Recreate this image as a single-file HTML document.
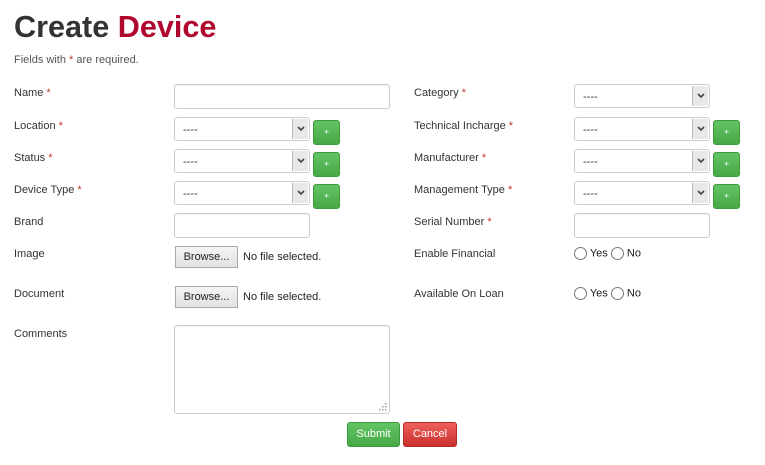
<!DOCTYPE html>
<html><head><meta charset="utf-8"><style>
*{box-sizing:border-box;margin:0;padding:0}
body{width:765px;height:465px;background:#fff;font-family:"Liberation Sans",Arial,sans-serif;position:relative;overflow:hidden;color:#333}
.a{position:absolute}
h1{position:absolute;left:14px;top:10px;font-size:30.6px;font-weight:bold;color:#333;letter-spacing:0}
h1 span{color:#b0072e}
.sub{left:14px;top:54px;font-size:11px;color:#555}
.req{color:#c0392b}
.lbl{font-size:11px;color:#333}
.inp{border:1px solid #ccc;border-radius:3px;background:#fff;box-shadow:inset 0 1px 1px rgba(0,0,0,.06)}
.sel{border:1px solid #ccc;border-radius:3px;background:#fff;height:24px;width:136px;font-size:11px;padding:6px 0 0 8px;color:#333}
.sel:after{content:"";position:absolute;right:1px;top:1px;width:15px;height:20px;background:#e8e8e8;border-left:1px solid #bbb}
.sel svg{position:absolute;right:4px;top:8px;z-index:2}
.plus{width:27px;height:25px;border-radius:3px;background:linear-gradient(#62c462,#45a745);border:1px solid #3e983e;color:#fff;font-size:9px;text-align:center;line-height:23px}
.br{width:63px;height:22px;border:1px solid #aaa;background:linear-gradient(#f4f4f4,#e2e2e2);font-size:11px;text-align:center;line-height:20px;color:#222}
.nf{font-size:11px;color:#222}
.rad{width:13px;height:13px;border:1px solid #777;border-radius:50%;background:#fff;display:inline-block;vertical-align:middle}
.rl{font-size:11px;color:#222}
.btn{height:25px;border-radius:3px;color:#fff;font-size:11px;text-align:center;line-height:23px}
</style></head><body>
<h1>Create <span>Device</span></h1>
<div class="a sub">Fields with <span class="req">*</span> are required.</div>

<div class="a lbl" style="left:14px;top:87px">Name <span class="req">*</span></div>
<div class="a inp" style="left:174px;top:84px;width:216px;height:25px"></div>

<div class="a lbl" style="left:14px;top:120px">Location <span class="req">*</span></div>
<div class="a sel" style="left:174px;top:117px">----<svg width="8" height="6" viewBox="0 0 8 6"><path d="M1 1L4 4L7 1" stroke="#444" stroke-width="1.6" fill="none"/></svg></div>
<div class="a plus" style="left:313px;top:120px">+</div>

<div class="a lbl" style="left:14px;top:152px">Status <span class="req">*</span></div>
<div class="a sel" style="left:174px;top:149px">----<svg width="8" height="6" viewBox="0 0 8 6"><path d="M1 1L4 4L7 1" stroke="#444" stroke-width="1.6" fill="none"/></svg></div>
<div class="a plus" style="left:313px;top:152px">+</div>

<div class="a lbl" style="left:14px;top:184px">Device Type <span class="req">*</span></div>
<div class="a sel" style="left:174px;top:181px">----<svg width="8" height="6" viewBox="0 0 8 6"><path d="M1 1L4 4L7 1" stroke="#444" stroke-width="1.6" fill="none"/></svg></div>
<div class="a plus" style="left:313px;top:184px">+</div>

<div class="a lbl" style="left:14px;top:216px">Brand</div>
<div class="a inp" style="left:174px;top:213px;width:136px;height:25px"></div>

<div class="a lbl" style="left:14px;top:248px">Image</div>
<div class="a br" style="left:175px;top:246px">Browse...</div>
<div class="a nf" style="left:243px;top:251px">No file selected.</div>

<div class="a lbl" style="left:14px;top:288px">Document</div>
<div class="a br" style="left:175px;top:286px">Browse...</div>
<div class="a nf" style="left:243px;top:291px">No file selected.</div>

<div class="a lbl" style="left:14px;top:328px">Comments</div>
<div class="a inp" style="left:174px;top:325px;width:216px;height:89px"><svg class="a" style="right:2px;bottom:2px" width="8" height="8"><g fill="#999"><rect x="6" y="0" width="1.5" height="1.5"/><rect x="3" y="3" width="1.5" height="1.5"/><rect x="6" y="3" width="1.5" height="1.5"/><rect x="0" y="6" width="1.5" height="1.5"/><rect x="3" y="6" width="1.5" height="1.5"/><rect x="6" y="6" width="1.5" height="1.5"/></g></svg></div>

<div class="a btn" style="left:347px;top:422px;width:53px;background:linear-gradient(#62c462,#48a848);border:1px solid #3e983e">Submit</div>
<div class="a btn" style="left:403px;top:422px;width:54px;background:linear-gradient(#ee5f5b,#c9302c);border:1px solid #b52b27">Cancel</div>

<div class="a lbl" style="left:414px;top:87px">Category <span class="req">*</span></div>
<div class="a sel" style="left:574px;top:84px">----<svg width="8" height="6" viewBox="0 0 8 6"><path d="M1 1L4 4L7 1" stroke="#444" stroke-width="1.6" fill="none"/></svg></div>

<div class="a lbl" style="left:414px;top:120px">Technical Incharge <span class="req">*</span></div>
<div class="a sel" style="left:574px;top:117px">----<svg width="8" height="6" viewBox="0 0 8 6"><path d="M1 1L4 4L7 1" stroke="#444" stroke-width="1.6" fill="none"/></svg></div>
<div class="a plus" style="left:713px;top:120px">+</div>

<div class="a lbl" style="left:414px;top:152px">Manufacturer <span class="req">*</span></div>
<div class="a sel" style="left:574px;top:149px">----<svg width="8" height="6" viewBox="0 0 8 6"><path d="M1 1L4 4L7 1" stroke="#444" stroke-width="1.6" fill="none"/></svg></div>
<div class="a plus" style="left:713px;top:152px">+</div>

<div class="a lbl" style="left:414px;top:184px">Management Type <span class="req">*</span></div>
<div class="a sel" style="left:574px;top:181px">----<svg width="8" height="6" viewBox="0 0 8 6"><path d="M1 1L4 4L7 1" stroke="#444" stroke-width="1.6" fill="none"/></svg></div>
<div class="a plus" style="left:713px;top:184px">+</div>

<div class="a lbl" style="left:414px;top:216px">Serial Number <span class="req">*</span></div>
<div class="a inp" style="left:574px;top:213px;width:136px;height:25px"></div>

<div class="a lbl" style="left:414px;top:248px">Enable Financial</div>
<div class="a rl" style="left:574px;top:247px"><span class="rad"></span> Yes <span class="rad"></span> No</div>

<div class="a lbl" style="left:414px;top:288px">Available On Loan</div>
<div class="a rl" style="left:574px;top:287px"><span class="rad"></span> Yes <span class="rad"></span> No</div>
</body></html>
